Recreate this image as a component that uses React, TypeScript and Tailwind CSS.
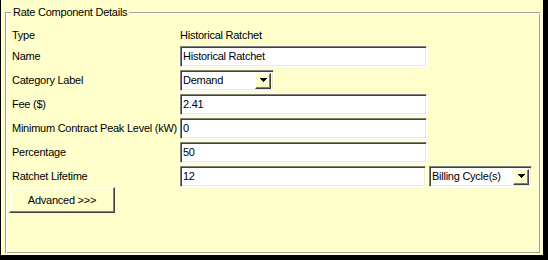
import React from "react";

function Caret() {
  return (
    <div className="w-[16px] h-[16px] bg-[#ffffcc] border border-t-[#ffffff] border-l-[#ffffff] border-b-[#404040] border-r-[#404040] shadow-[inset_-1px_-1px_0_#808080] flex items-center justify-center shrink-0">
      <svg width="7" height="4" viewBox="0 0 7 4" shapeRendering="crispEdges" className="mb-[1px]">
        <rect x="0" y="0" width="7" height="1" fill="#000" />
        <rect x="1" y="1" width="5" height="1" fill="#000" />
        <rect x="2" y="2" width="3" height="1" fill="#000" />
        <rect x="3" y="3" width="1" height="1" fill="#000" />
      </svg>
    </div>
  );
}

const sunken =
  "h-[21px] bg-white border border-t-[#808080] border-l-[#808080] border-b-[#ffffff] border-r-[#ffffff] shadow-[inset_1px_1px_0_#404040,inset_-1px_-1px_0_#e8e8d8] flex items-center";

function TextBox({ value, w }: { value: string; w: string }) {
  return (
    <div className={`${sunken} ${w} pl-[2px]`}>
      <span className="leading-none">{value}</span>
    </div>
  );
}

function Select({ value, w }: { value: string; w: string }) {
  return (
    <div className={`${sunken} ${w} pl-[2px] pr-[2px] justify-between`}>
      <span className="leading-none">{value}</span>
      <Caret />
    </div>
  );
}

function Row({ label, children, h = "h-[21px]" }: { label: string; children: React.ReactNode; h?: string }) {
  return (
    <div className={`flex items-center ${h}`}>
      <div className="w-[171px] pl-[3px] shrink-0 leading-none">{label}</div>
      {children}
    </div>
  );
}

export default function App() {
  return (
    <div className="w-[548px] h-[260px] bg-[#ffffcc] border-l border-r-[5px] border-b-[5px] border-black flex pt-[12px] pl-[4px] pr-[2px] pb-[1px] font-['Liberation_Sans',Arial,sans-serif] text-[11px] tracking-[-0.25px] text-black">
      <div className="relative flex-1 border border-t-[#a0a0a0] border-l-[#a0a0a0] border-b-[#ffffff] border-r-[#ffffff] shadow-[inset_1px_1px_0_#ffffff,inset_-1px_-1px_0_#a0a0a0] pt-[15px] pl-[3px]">
        <div className="absolute left-[5px] top-[-7px] bg-[#ffffcc] px-[2px] leading-[13px]">
          Rate Component Details
        </div>
        <div className="flex flex-col gap-[3px]">
          <Row label="Type" h="h-[15px]">
            <span className="leading-none">Historical Ratchet</span>
          </Row>
          <Row label="Name">
            <TextBox value="Historical Ratchet" w="w-[247px]" />
          </Row>
          <Row label="Category Label">
            <Select value="Demand" w="w-[94px]" />
          </Row>
          <Row label="Fee ($)">
            <TextBox value="2.41" w="w-[247px]" />
          </Row>
          <Row label="Minimum Contract Peak Level (kW)">
            <TextBox value="0" w="w-[247px]" />
          </Row>
          <Row label="Percentage">
            <TextBox value="50" w="w-[247px]" />
          </Row>
          <Row label="Ratchet Lifetime">
            <TextBox value="12" w="w-[246px]" />
            <div className="ml-[3px]">
              <Select value="Billing Cycle(s)" w="w-[103px]" />
            </div>
          </Row>
        </div>
        <button className="w-[106px] h-[26px] bg-[#ffffcc] border border-t-[#ffffff] border-l-[#ffffff] border-b-[#404040] border-r-[#404040] shadow-[inset_-1px_-1px_0_#808080,inset_1px_1px_0_#fffff0] flex items-center justify-center text-[11px] leading-none">
          Advanced &gt;&gt;&gt;
        </button>
      </div>
    </div>
  );
}
